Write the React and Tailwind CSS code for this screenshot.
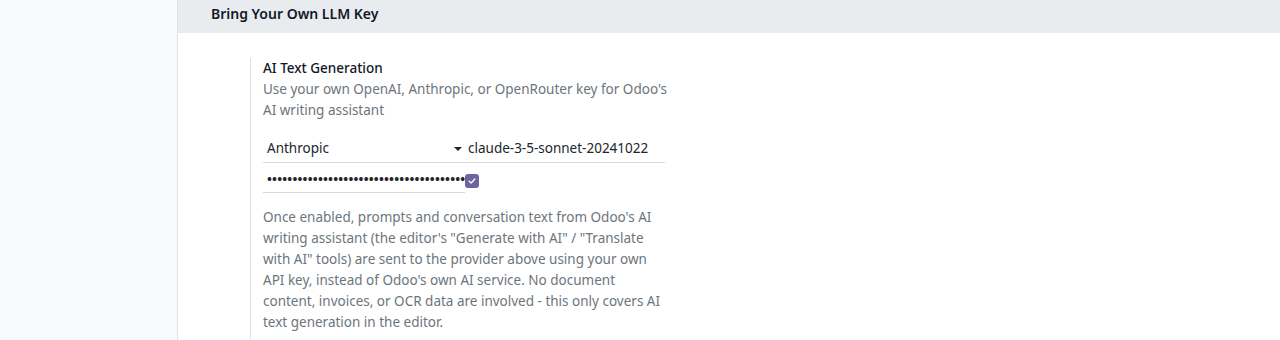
import React from 'react';

const font = { fontFamily: '"Noto Sans", "Open Sans", sans-serif' };

const App = () => {
    return (
        <div className="flex w-[1280px] h-[340px] bg-white overflow-hidden" style={font}>
            {/* Left sidebar */}
            <div className="w-[178px] shrink-0 bg-[#f8f9fa] border-r border-[#dee2e6]"></div>

            <div className="flex-1 flex flex-col">
                {/* Section header */}
                <div className="h-[33px] shrink-0 bg-[#e9ecef] flex items-center pl-[33px] pb-[5px]">
                    <h2 className="text-[14px] font-semibold text-[#111827] leading-none">Bring Your Own LLM Key</h2>
                </div>

                {/* Setting block */}
                <div className="pl-[72px] pt-[25px]">
                    <div className="border-l border-[#dee2e6] pl-[12px] w-[416px] pb-[6px]">
                        <div className="text-[13.5px] font-medium text-[#111827] leading-[21px]">AI Text Generation</div>
                        <div className="w-[412px] text-[13.5px] text-[#6c757d] leading-[21px]">
                            Use your own OpenAI, Anthropic, or OpenRouter key for Odoo's AI writing assistant
                        </div>

                        {/* Provider + model */}
                        <div className="mt-[17px] flex items-center h-[25px] pb-[3px] border-b border-[#d8dadd] w-[402px]">
                            <div className="w-[205px] flex items-center justify-between pl-[4px] pr-[6px] text-[13.5px] text-[#212529]">
                                <span>Anthropic</span>
                                <span className="w-0 h-0 border-x-[4px] border-x-transparent border-t-[4px] border-t-[#212529]"></span>
                            </div>
                            <div className="text-[13.5px] text-[#212529]">claude-3-5-sonnet-20241022</div>
                        </div>

                        {/* API key + checkbox */}
                        <div className="mt-[5px] flex items-center">
                            <div className="w-[202px] h-[25px] border-b border-[#d8dadd] flex items-center pl-[4px] overflow-hidden whitespace-nowrap text-[13px] font-bold tracking-[0.2px] text-[#212529]">
                                ••••••••••••••••••••••••••••••••••••••••
                            </div>
                            <div className="w-[14px] h-[14px] rounded-[3px] bg-[#71639e] flex items-center justify-center">
                                <svg width="8" height="8" viewBox="0 0 10 10" fill="none">
                                    <path d="M1.5 5.2 L4 7.5 L8.5 2.5" stroke="white" strokeWidth="1.6" strokeLinecap="round" strokeLinejoin="round" />
                                </svg>
                            </div>
                        </div>

                        <p className="mt-[14px] text-[13.5px] text-[#6c757d] leading-[21px]">
                            Once enabled, prompts and conversation text from Odoo's AI writing assistant (the editor's "Generate with AI" / "Translate with AI" tools) are sent to the provider above using your own API key, instead of Odoo's own AI service. No document content, invoices, or OCR data are involved - this only covers AI text generation in the editor.
                        </p>
                    </div>
                </div>
            </div>
        </div>
    );
};

export default App;
